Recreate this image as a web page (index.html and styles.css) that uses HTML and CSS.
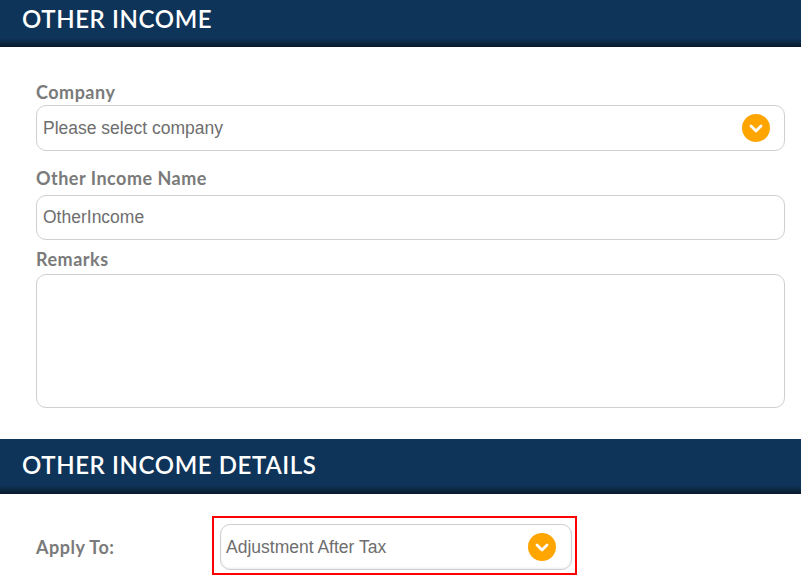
FILE: index.html
```html
<!DOCTYPE html>
<html>
<head>
<meta charset="utf-8">
<link rel="stylesheet" href="styles.css">
</head>
<body>
<div class="section-header first"><h2>OTHER INCOME</h2></div>
<div class="form">
  <label class="label lbl-company">Company</label>
  <div class="field select sel-company">
    <span class="value">Please select company</span>
    <span class="chev"><svg viewBox="0 0 28 28" width="28" height="28"><path d="M9 12 L14 17 L19 12" fill="none" stroke="#fff" stroke-width="2.8" stroke-linecap="round" stroke-linejoin="round"/></svg></span>
  </div>
  <label class="label lbl-name">Other Income Name</label>
  <div class="field input-name"><span class="value">OtherIncome</span></div>
  <label class="label lbl-remarks">Remarks</label>
  <div class="field textarea"></div>
</div>
<div class="section-header second"><h2>OTHER INCOME DETAILS</h2></div>
<div class="details">
  <div class="label apply-label">Apply To:</div>
  <div class="highlight">
    <div class="field select sel-apply">
      <span class="value">Adjustment After Tax</span>
      <span class="chev"><svg viewBox="0 0 28 28" width="28" height="28"><path d="M9 12 L14 17 L19 12" fill="none" stroke="#fff" stroke-width="2.8" stroke-linecap="round" stroke-linejoin="round"/></svg></span>
    </div>
  </div>
</div>
</body>
</html>
```

FILE: styles.css
```css
html, body {
  margin: 0;
  padding: 0;
  background: #fff;
  overflow: hidden;
}
body {
  width: 801px;
  height: 587px;
  font-family: "Lato", "Liberation Sans", sans-serif;
}
.section-header {
  background: linear-gradient(to bottom, #0f345a 0, #0f345a calc(100% - 9px), #0c2740 calc(100% - 4px), #08182a 100%);
  padding-left: 22px;
  box-sizing: border-box;
}
.section-header h2 {
  margin: 0;
  color: #fff;
  font-family: "Lato", sans-serif;
  font-weight: 600;
  font-size: 24px;
  letter-spacing: 0.6px;
  line-height: 24px;
}
.section-header.first {
  height: 47px;
  padding-top: 7px;
}
.section-header.second {
  height: 55px;
  padding-top: 14px;
  margin-top: 31px;
}
.form {
  padding: 34px 16px 0 36px;
  display: flex;
  flex-direction: column;
}
.label {
  color: #7a7a7a;
  font-weight: 700;
  font-size: 18px;
  line-height: 22px;
  letter-spacing: 0.5px;
}
.field {
  border: 1px solid #cfcfcf;
  border-radius: 10px;
  box-sizing: border-box;
  height: 46px;
  display: flex;
  align-items: center;
  padding: 0 14px 0 6px;
  background: #fff;
}
.value {
  font-family: "Liberation Sans", Arial, sans-serif;
  font-size: 17.5px;
  color: #6e6e6e;
  flex: 1;
}
.chev {
  width: 28px;
  height: 28px;
  border-radius: 50%;
  background: #ffa500;
  display: flex;
}
.sel-company { margin-top: 2px; }
.lbl-name { margin-top: 16px; }
.input-name { margin-top: 6px; height: 45px; }
.lbl-remarks { margin-top: 8px; }
.textarea { margin-top: 4px; height: 134px; }
.details {
  display: grid;
  grid-template-columns: 176px 365px;
  align-items: center;
  padding: 22px 0 0 36px;
}
.apply-label { padding-top: 2px; }
.highlight {
  border: 2px solid #ff0000;
  padding: 6px 3px 3px 6px;
  box-sizing: border-box;
  width: 365px;
}
.sel-apply {
  height: 46px;
  box-shadow: inset 0 -1px 2px rgba(0,0,0,0.08);
  padding-right: 15px;
  padding-left: 5px;
}
```
